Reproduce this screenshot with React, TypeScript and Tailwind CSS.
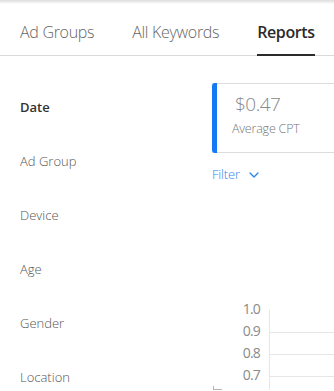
import { ChevronDown } from "lucide-react";

const tabs = ["Ad Groups", "All Keywords", "Reports"];
const dimensions = ["Date", "Ad Group", "Device", "Age", "Gender", "Location"];

function Chart() {
  const ticks = ["1.0", "0.9", "0.8", "0.7"];
  return (
    <svg width="122" height="92" className="block">
      {ticks.map((t, i) => (
        <text
          key={t}
          x="48"
          y={16 + i * 22}
          textAnchor="end"
          fontSize="14"
          fill="#8a8a8a"
          fontFamily="'Open Sans', sans-serif"
          letterSpacing="-0.8"
        >
          {t}
        </text>
      ))}
      <line x1="57.5" y1="12" x2="57.5" y2="92" stroke="#e6e6e6" />
      {[1, 2, 3].map((i) => (
        <line key={i} x1="58" y1={12.5 + i * 22} x2="122" y2={12.5 + i * 22} stroke="#e6e6e6" />
      ))}
      <path d="M1.5 88 V92 M1.5 91.5 H10" stroke="#b5b5b5" fill="none" />
    </svg>
  );
}

export default function App() {
  return (
    <div
      className="w-[334px] h-[391px] overflow-hidden bg-white relative"
      style={{ fontFamily: "'Open Sans', 'Liberation Sans', sans-serif" }}
    >
      <div className="h-[4px] bg-gradient-to-b from-[#dcdcdc] to-white" />
      <div className="flex h-[52px] border-b border-[#d9d9d9] pl-[20px] gap-[38px] whitespace-nowrap">
        {tabs.map((tab) => {
          const active = tab === "Reports";
          return (
            <div
              key={tab}
              className={`flex items-center pt-[6px] text-[16px] -mb-px border-b-2 ${
                active
                  ? "border-[#2b2b2b] text-[#2b2b2b] font-semibold tracking-[-0.4px]"
                  : "border-transparent text-[#666] font-light tracking-[-0.3px]"
              }`}
            >
              {tab}
            </div>
          );
        })}
      </div>

      <div className="flex">
        <div className="w-[212px] shrink-0 pl-[20px] pt-[42px] flex flex-col gap-[36px]">
          {dimensions.map((d) => (
            <div
              key={d}
              className={`text-[13px] leading-[18px] ${
                d === "Date" ? "font-semibold text-[#333]" : "font-light text-[#555]"
              }`}
            >
              {d}
            </div>
          ))}
        </div>

        <div className="shrink-0 pt-[27px] whitespace-nowrap">
          <div className="flex h-[70px] w-[160px] border border-l-0 border-[#dcdcdc]">
            <div className="w-[5px] bg-[#1479f5] rounded-l-[3px] -mt-px -mb-px" />
            <div className="pl-[18px] pt-[7px]">
              <div className="text-[19px] font-light text-[#888] leading-[26px] tracking-[-0.5px]">
                $0.47
              </div>
              <div className="text-[12.5px] font-light text-[#777] mt-[3px] -ml-[3px] tracking-[-0.2px]">
                Average CPT
              </div>
            </div>
          </div>
          <div className="flex items-center gap-[6px] mt-[12px] text-[13px] font-light text-[#2f86f0] tracking-[-0.2px]">
            Filter
            <ChevronDown size={16} strokeWidth={2} />
          </div>
          <div className="mt-[113px]">
            <Chart />
          </div>
        </div>
      </div>
    </div>
  );
}
